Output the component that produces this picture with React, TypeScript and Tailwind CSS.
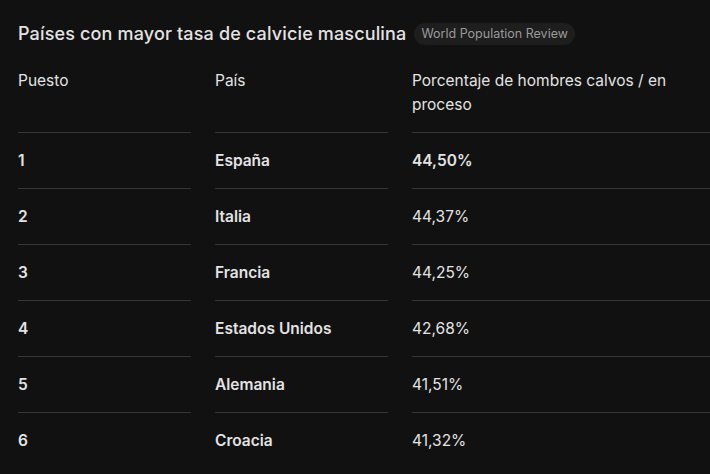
import React from "react";

const rows = [
  ["1", "España", "44,50%"],
  ["2", "Italia", "44,37%"],
  ["3", "Francia", "44,25%"],
  ["4", "Estados Unidos", "42,68%"],
  ["5", "Alemania", "41,51%"],
  ["6", "Croacia", "41,32%"],
];

export default function App() {
  return (
    <div
      className="w-[710px] h-[474px] overflow-hidden bg-[#111111] text-[#e3e3e3] pl-[18px] pt-[18px]"
      style={{ fontFamily: "Inter, Roboto, sans-serif" }}
    >
      <div className="flex items-center gap-[8px] h-[32px]">
        <h2 className="text-[18px] leading-[24px] font-medium text-[#e3e3e3] whitespace-nowrap tracking-[0.15px]">
          Países con mayor tasa de calvicie masculina
        </h2>
        <span className="rounded-full bg-[#1e1e1e] px-[7px] h-[22px] flex items-center text-[12.5px] text-[#9a9a9a] whitespace-nowrap">
          World Population Review
        </span>
      </div>
      <div className="grid grid-cols-[173px_173px_1fr] gap-x-[24px] pt-[19px] pb-[15px] text-[15.5px] leading-[24px]">
        <div>Puesto</div>
        <div>País</div>
        <div className="pr-[30px]">Porcentaje de hombres calvos / en proceso</div>
      </div>
      {rows.map((r, i) => (
        <div
          key={r[0]}
          className="grid grid-cols-[173px_173px_1fr] gap-x-[24px] text-[15.5px] leading-[24px]"
        >
          <div className="border-t border-[#363636] h-[56px] flex items-center font-semibold">{r[0]}</div>
          <div className="border-t border-[#363636] h-[56px] flex items-center font-semibold">{r[1]}</div>
          <div className={`border-t border-[#363636] h-[56px] flex items-center ${i === 0 ? "font-semibold" : "font-normal"}`}>
            {r[2]}
          </div>
        </div>
      ))}
    </div>
  );
}
